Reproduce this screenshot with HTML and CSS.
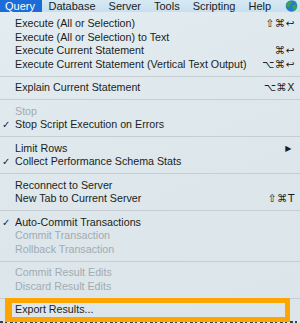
FILE: index.html
```html
<!DOCTYPE html>
<html lang="en">
<head>
    <meta charset="UTF-8">
    <meta name="viewport" content="width=device-width, initial-scale=1.0">
    <title>Query Menu</title>
    <link rel="stylesheet" href="styles.css">
</head>
<body>
    <div class="screen">
        <div class="menubar">
            <span class="menubar-item active">Query</span>
            <span class="menubar-item">Database</span>
            <span class="menubar-item">Server</span>
            <span class="menubar-item">Tools</span>
            <span class="menubar-item">Scripting</span>
            <span class="menubar-item">Help</span>
            <span class="globe">
                <svg width="13" height="12" viewBox="0 0 13 12">
                    <circle cx="6.5" cy="6" r="5.8" fill="#2a78d2"/>
                    <path d="M2.6 2 C4 0.8 6.2 0.6 7 1.6 C7.6 2.6 6.4 3.4 5.6 4 C4.8 4.8 5.4 6 4.4 6.8 C3.4 7.4 2.2 6.8 1.2 6.2 C0.8 4.6 1.4 3 2.6 2 Z" fill="#34a84a"/>
                    <path d="M7.8 5 C9.2 4.4 11 4.8 12 6.2 C12 8.4 10.6 10.4 8.6 11.2 C7.8 10.4 8.4 9.2 7.8 8.2 C7.2 7.2 7 5.6 7.8 5 Z" fill="#34a84a"/>
                    <path d="M8.4 0.6 C9.8 0.8 11.2 1.8 11.8 3.2 C10.6 3.2 9.4 2.4 8.4 0.6 Z" fill="#34a84a"/>
                </svg>
            </span>
        </div>

        <div class="menu">
            <div class="item"><span class="check"></span><span class="label">Execute (All or Selection)</span><span class="key">⇧⌘↩</span></div>
            <div class="item"><span class="check"></span><span class="label">Execute (All or Selection) to Text</span><span class="key"></span></div>
            <div class="item"><span class="check"></span><span class="label">Execute Current Statement</span><span class="key">⌘↩</span></div>
            <div class="item"><span class="check"></span><span class="label">Execute Current Statement (Vertical Text Output)</span><span class="key">⌥⌘↩</span></div>
            <div class="sep"></div>
            <div class="item"><span class="check"></span><span class="label">Explain Current Statement</span><span class="key">⌥⌘X</span></div>
            <div class="sep"></div>
            <div class="item disabled"><span class="check"></span><span class="label">Stop</span><span class="key"></span></div>
            <div class="item"><span class="check">✓</span><span class="label">Stop Script Execution on Errors</span><span class="key"></span></div>
            <div class="sep"></div>
            <div class="item"><span class="check"></span><span class="label">Limit Rows</span><span class="key arrow">▶</span></div>
            <div class="item"><span class="check">✓</span><span class="label">Collect Performance Schema Stats</span><span class="key"></span></div>
            <div class="sep"></div>
            <div class="item"><span class="check"></span><span class="label">Reconnect to Server</span><span class="key"></span></div>
            <div class="item"><span class="check"></span><span class="label">New Tab to Current Server</span><span class="key">⇧⌘T</span></div>
            <div class="sep"></div>
            <div class="item"><span class="check">✓</span><span class="label">Auto-Commit Transactions</span><span class="key"></span></div>
            <div class="item disabled"><span class="check"></span><span class="label">Commit Transaction</span><span class="key"></span></div>
            <div class="item disabled"><span class="check"></span><span class="label">Rollback Transaction</span><span class="key"></span></div>
            <div class="sep"></div>
            <div class="item disabled"><span class="check"></span><span class="label">Commit Result Edits</span><span class="key"></span></div>
            <div class="item disabled"><span class="check"></span><span class="label">Discard Result Edits</span><span class="key"></span></div>
            <div class="sep"></div>
            <div class="item export"><span class="check"></span><span class="label">Export Results...</span><span class="key"></span>
                <div class="callout"></div>
            </div>
        </div>

        <div class="behind"></div>
    </div>
</body>
</html>
```

FILE: styles.css
```css
body {
    margin: 0;
    font-family: "Liberation Sans", Arial, sans-serif;
    color: #1a1e22;
}
.screen {
    width: 300px;
    height: 323px;
    overflow: hidden;
    display: flex;
    flex-direction: column;
    background: #dde7ec;
}
.menubar {
    height: 12px;
    display: flex;
    align-items: center;
    background: linear-gradient(#d6e8f4, #c9dfee);
    font-size: 11px;
    line-height: 12px;
    flex-shrink: 0;
}
.menubar-item {
    padding: 0 6.5px;
    height: 12px;
}
.menubar-item.active {
    background-color: #1b6bd8;
    color: white;
    padding: 0 7px 0 5px;
}
.globe {
    margin-left: auto;
    margin-right: 2px;
    height: 12px;
    display: flex;
    align-items: center;
}
.menu {
    flex: 1;
    padding-top: 5px;
    background: linear-gradient(160deg, #e3ecf0 0%, #dce6eb 60%, #dbe5ea 100%);
    font-size: 10.7px;
}
.item {
    display: grid;
    grid-template-columns: 15px 1fr auto;
    align-items: center;
    height: 13.6px;
    line-height: 13.6px;
    padding-right: 5px;
    white-space: nowrap;
}
.check {
    padding-left: 2px;
    font-family: "DejaVu Sans", sans-serif;
    font-size: 10px;
}
.label {
    overflow: hidden;
}
.key {
    font-family: "DejaVu Sans", sans-serif;
    font-size: 10.5px;
    letter-spacing: 0.5px;
}
.key.arrow {
    font-size: 8px;
    padding-right: 3px;
}
.disabled {
    color: #a3abb0;
}
.sep {
    height: 9.8px;
    display: flex;
    align-items: center;
}
.sep::after {
    content: "";
    flex: 1;
    height: 1px;
    background: #c6ced3;
}
.export {
    position: relative;
}
.callout {
    position: absolute;
    left: 5px;
    right: 10px;
    top: -5px;
    bottom: -5px;
    border: 5px solid #ffa500;
    border-left-width: 7px;
}
.behind {
    height: 2px;
    flex-shrink: 0;
    background: repeating-linear-gradient(90deg, #3c4043 0 3px, #dde7ec 3px 5px, #3c4043 5px 7px, #dde7ec 7px 10px);
}
```
